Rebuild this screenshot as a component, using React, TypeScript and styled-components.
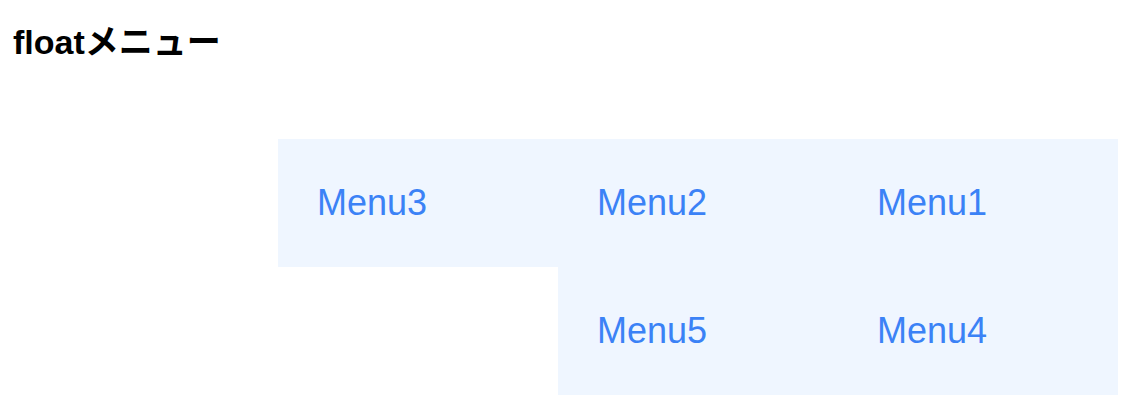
import React from 'react'
import styled, { createGlobalStyle } from 'styled-components'

const ITEM_WIDTH = 280
const ITEM_HEIGHT = 128

const menus = ['Menu1', 'Menu2', 'Menu3', 'Menu4', 'Menu5']

const GlobalStyle = createGlobalStyle`
  body {
    margin: 8px;
    font-family: 'Liberation Sans', 'Noto Sans CJK JP', sans-serif;
    background-color: #fff;
  }
`

const App = () => (
  <>
    <GlobalStyle />
    <Title>floatメニュー</Title>
    <MenuList>
      {menus.map(label => (
        <MenuItem key={label}>
          <MenuLink href="#">{label}</MenuLink>
        </MenuItem>
      ))}
    </MenuList>
  </>
)

export default App

const Title = styled.h1`
  margin: 10px 0 73px 5px;
  font-size: 34px;
  line-height: 48px;
  font-weight: bold;
  color: #000;
`
const MenuList = styled.ul`
  display: flex;
  flex-direction: row-reverse;
  flex-wrap: wrap;
  margin: 0;
  padding: 0;
  list-style: none;
`
const MenuItem = styled.li`
  display: flex;
  align-items: center;
  width: ${ITEM_WIDTH}px;
  height: ${ITEM_HEIGHT}px;
  padding-left: 39px;
  box-sizing: border-box;
  background-color: #eff6ff;
`
const MenuLink = styled.a`
  color: #3b82f6;
  font-size: 36px;
  text-decoration: none;
`
